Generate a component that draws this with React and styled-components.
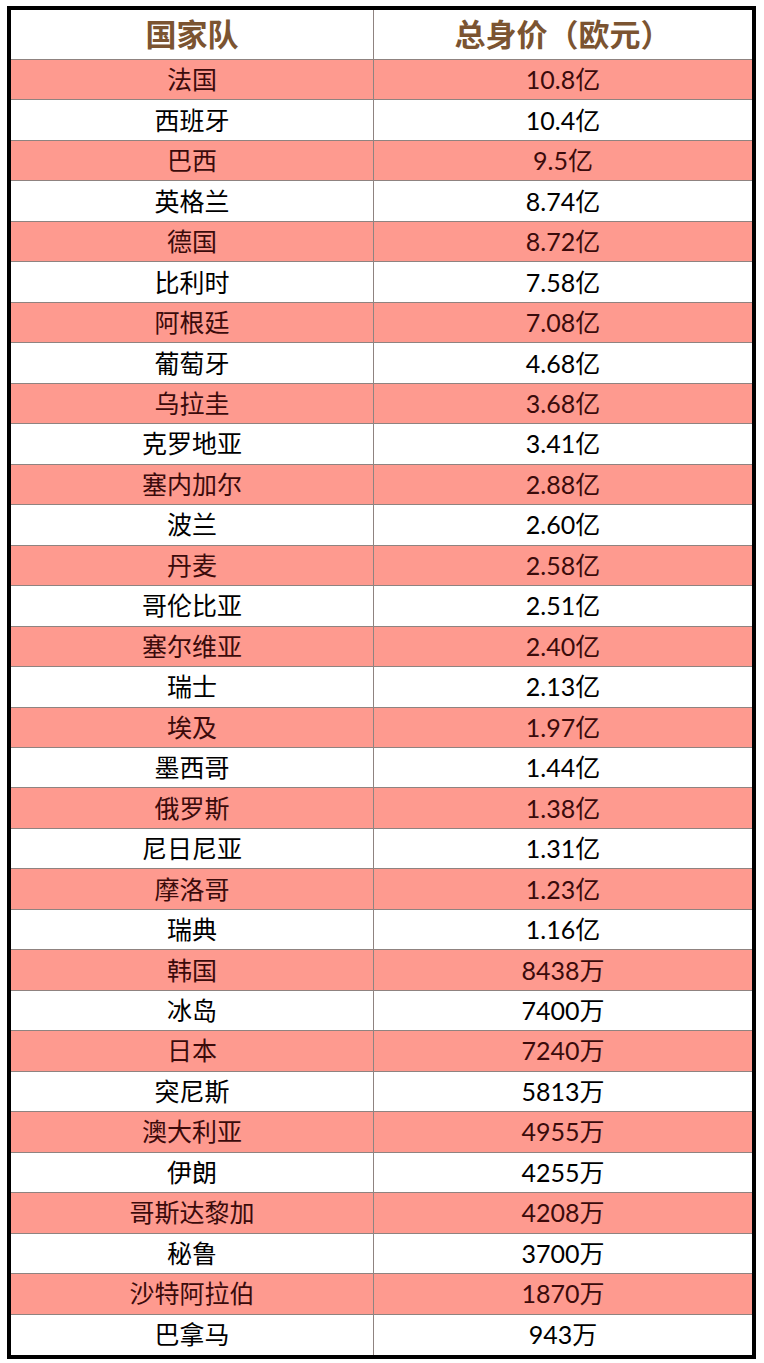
import React from 'react';
import styled, { createGlobalStyle } from 'styled-components';

const GlobalStyle = createGlobalStyle`
  html, body {
    margin: 0;
    padding: 0;
    background: #ffffff;
  }
  body {
    font-family: Lato, "Noto Sans CJK SC", sans-serif;
  }
`;

const Page = styled.div`
  padding: 6px 8px 4px 7px;
`;

const Table = styled.div`
  width: 741px;
  border: 4px solid #000;
  background: #fff;
`;

const Row = styled.div`
  display: grid;
  grid-template-columns: 362px 1fr;
  height: ${(p) => (p.$header ? '50px' : '40.47px')};
  box-sizing: border-box;
  border-bottom: ${(p) => (p.$last ? 'none' : '1px solid #8f8380')};
  background: ${(p) => (p.$pink ? '#fe9a8f' : '#ffffff')};
`;

const Cell = styled.div`
  display: flex;
  align-items: center;
  justify-content: center;
  border-left: ${(p) => (p.$right ? '1px solid #8f8380' : 'none')};
  font-size: ${(p) => (p.$header ? '31px' : '25px')};
  font-weight: ${(p) => (p.$header ? 700 : 400)};
  color: ${(p) => (p.$header ? '#7b5431' : p.$pink ? '#3b0b0b' : '#000000')};
  line-height: 1;
  white-space: nowrap;
`;

const data = [
  ['法国', '10.8亿'],
  ['西班牙', '10.4亿'],
  ['巴西', '9.5亿'],
  ['英格兰', '8.74亿'],
  ['德国', '8.72亿'],
  ['比利时', '7.58亿'],
  ['阿根廷', '7.08亿'],
  ['葡萄牙', '4.68亿'],
  ['乌拉圭', '3.68亿'],
  ['克罗地亚', '3.41亿'],
  ['塞内加尔', '2.88亿'],
  ['波兰', '2.60亿'],
  ['丹麦', '2.58亿'],
  ['哥伦比亚', '2.51亿'],
  ['塞尔维亚', '2.40亿'],
  ['瑞士', '2.13亿'],
  ['埃及', '1.97亿'],
  ['墨西哥', '1.44亿'],
  ['俄罗斯', '1.38亿'],
  ['尼日尼亚', '1.31亿'],
  ['摩洛哥', '1.23亿'],
  ['瑞典', '1.16亿'],
  ['韩国', '8438万'],
  ['冰岛', '7400万'],
  ['日本', '7240万'],
  ['突尼斯', '5813万'],
  ['澳大利亚', '4955万'],
  ['伊朗', '4255万'],
  ['哥斯达黎加', '4208万'],
  ['秘鲁', '3700万'],
  ['沙特阿拉伯', '1870万'],
  ['巴拿马', '943万'],
];

export default function App() {
  return (
    <>
      <GlobalStyle />
      <Page>
        <Table>
          <Row $header>
            <Cell $header>国家队</Cell>
            <Cell $header $right>总身价（欧元）</Cell>
          </Row>
          {data.map(([team, value], i) => {
            const pink = i % 2 === 0;
            return (
              <Row key={team} $pink={pink} $last={i === data.length - 1}>
                <Cell $pink={pink}>{team}</Cell>
                <Cell $pink={pink} $right>{value}</Cell>
              </Row>
            );
          })}
        </Table>
      </Page>
    </>
  );
}
